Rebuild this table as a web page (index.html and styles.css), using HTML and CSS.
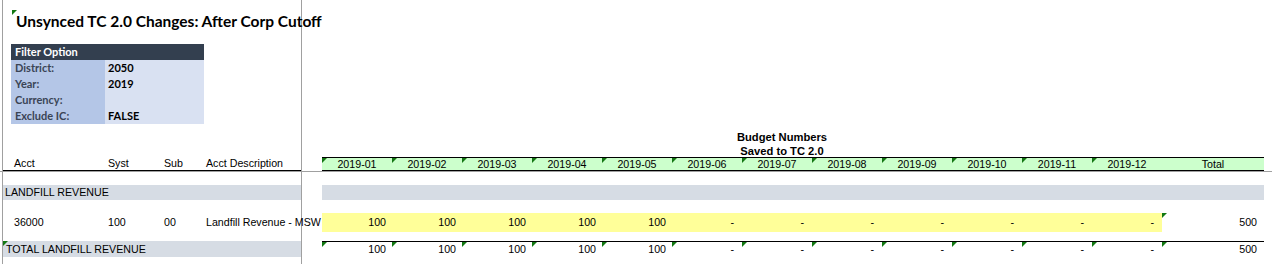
FILE: index.html
```html
<!DOCTYPE html>
<html>
<head>
<meta charset="utf-8">
<link rel="stylesheet" href="styles.css">
</head>
<body>
<div class="sheet">
  <div class="title"><span class="mark"></span><h1>Unsynced TC 2.0 Changes: After Corp Cutoff</h1></div>

  <div class="filter">
    <div class="f-head">Filter Option</div>
    <div class="f-label">District:</div><div class="f-val">2050</div>
    <div class="f-label">Year:</div><div class="f-val">2019</div>
    <div class="f-label">Currency:</div><div class="f-val"></div>
    <div class="f-label">Exclude IC:</div><div class="f-val">FALSE</div>
  </div>

  <div class="budget">Budget Numbers<br>Saved to TC 2.0</div>

  <div class="row hdr">
    <div class="left cols"><span class="c1">Acct</span><span>Syst</span><span>Sub</span><span>Acct Description</span></div>
    <div class="gap"></div>
    <div class="m"><span class="mark"></span>2019-01</div>
    <div class="m"><span class="mark"></span>2019-02</div>
    <div class="m"><span class="mark"></span>2019-03</div>
    <div class="m"><span class="mark"></span>2019-04</div>
    <div class="m"><span class="mark"></span>2019-05</div>
    <div class="m"><span class="mark"></span>2019-06</div>
    <div class="m"><span class="mark"></span>2019-07</div>
    <div class="m"><span class="mark"></span>2019-08</div>
    <div class="m"><span class="mark"></span>2019-09</div>
    <div class="m"><span class="mark"></span>2019-10</div>
    <div class="m"><span class="mark"></span>2019-11</div>
    <div class="m"><span class="mark"></span>2019-12</div>
    <div class="m">Total</div>
  </div>
  <div class="rule"></div>

  <div class="row group">
    <div class="left band">LANDFILL REVENUE</div>
    <div class="gap"></div>
    <div class="band span-all"></div>
  </div>

  <div class="row data">
    <div class="left cols"><span class="c1">36000</span><span>100</span><span>00</span><span class="desc">Landfill Revenue - MSW</span></div>
    <div class="gap"></div>
    <div class="v y">100</div>
    <div class="v y">100</div>
    <div class="v y">100</div>
    <div class="v y">100</div>
    <div class="v y">100</div>
    <div class="v y dash">-</div>
    <div class="v y dash">-</div>
    <div class="v y dash">-</div>
    <div class="v y dash">-</div>
    <div class="v y dash">-</div>
    <div class="v y dash">-</div>
    <div class="v y dash">-</div>
    <div class="v tot"><span class="mark"></span>500</div>
  </div>

  <div class="row total">
    <div class="left band"><span class="mark"></span>TOTAL LANDFILL REVENUE</div>
    <div class="gap"></div>
    <div class="v t"><span class="mark"></span>100</div>
    <div class="v t"><span class="mark"></span>100</div>
    <div class="v t"><span class="mark"></span>100</div>
    <div class="v t"><span class="mark"></span>100</div>
    <div class="v t"><span class="mark"></span>100</div>
    <div class="v t dash"><span class="mark"></span>-</div>
    <div class="v t dash"><span class="mark"></span>-</div>
    <div class="v t dash"><span class="mark"></span>-</div>
    <div class="v t dash"><span class="mark"></span>-</div>
    <div class="v t dash"><span class="mark"></span>-</div>
    <div class="v t dash"><span class="mark"></span>-</div>
    <div class="v t dash"><span class="mark"></span>-</div>
    <div class="v t tot"><span class="mark"></span>500</div>
  </div>
</div>
</body>
</html>
```

FILE: styles.css
```css
html, body {
  margin: 0;
  padding: 0;
}
body {
  width: 1272px;
  min-height: 264px;
  background:
    linear-gradient(#a0a0a0, #a0a0a0) 2px 0 / 1px 100% no-repeat,
    linear-gradient(#a0a0a0, #a0a0a0) 301px 0 / 1px 100% no-repeat,
    #ffffff;
  font-family: "Liberation Sans", Arial, sans-serif;
  font-size: 10.67px;
  color: #000;
  overflow: hidden;
}
.sheet {
  position: relative;
}
.mark {
  position: absolute;
  left: 0;
  top: 0;
  width: 0;
  height: 0;
  border-top: 5px solid #127812;
  border-right: 5px solid transparent;
}

/* title */
.title {
  position: relative;
  height: 44px;
}
.title .mark {
  left: 12px;
  top: 10px;
}
.title h1 {
  margin: 0;
  padding: 11px 0 0 16px;
  font-family: Lato, "Open Sans", sans-serif;
  font-weight: 700;
  font-size: 15.5px;
  line-height: 20px;
  color: #000;
  white-space: nowrap;
}

/* filter table */
.filter {
  margin-left: 11px;
  width: 193px;
  display: grid;
  grid-template-columns: 94px 99px;
  grid-auto-rows: 16px;
  font-family: Lato, "Open Sans", sans-serif;
  font-weight: 700;
  font-size: 11px;
  line-height: 16px;
}
.f-head {
  grid-column: 1 / -1;
  background: #333f4f;
  color: #fff;
  padding-left: 4px;
}
.f-label {
  background: #b4c6e7;
  color: #3a4455;
  padding-left: 4px;
}
.f-val {
  background: #d9e1f2;
  color: #000;
  padding-left: 3px;
}

/* budget header */
.budget {
  box-sizing: border-box;
  height: 33px;
  margin-left: 302px;
  width: 960px;
  padding-top: 6px;
  text-align: center;
  font-weight: 700;
  font-size: 11.2px;
  line-height: 14px;
}

/* grid rows */
.row {
  display: grid;
  grid-template-columns: 298px 21px repeat(12, 70px) 102px;
  padding-left: 3px;
  height: 15px;
}
.left {
  position: relative;
  white-space: nowrap;
}
.cols {
  display: grid;
  grid-template-columns: 105px 56px 42px 1fr;
}
.cols .c1 {
  padding-left: 11px;
}

.hdr {
  height: 14px;
  line-height: 13px;
}
.hdr .cols {
  border-bottom: 1px solid #000;
}
.hdr .m {
  position: relative;
  box-sizing: border-box;
  background: #ccffcc;
  border-top: 1px solid #000;
  border-bottom: 1px solid #000;
  text-align: center;
  line-height: 12px;
}
.rule {
  height: 1px;
  background: #a0a0a0;
}

.group {
  margin-top: 13px;
  line-height: 15px;
}
.band {
  background: #d6dce4;
}
.group .left {
  padding-left: 2px;
}
.span-all {
  grid-column: 3 / -1;
}

.data {
  margin-top: 13px;
  line-height: 18.5px;
}
.desc {
  overflow: visible;
}
.v {
  position: relative;
  text-align: right;
  padding-right: 6px;
}
.v.dash {
  padding-right: 8px;
}
.v.tot {
  padding-right: 7px;
}
.y {
  background: #ffff99;
}

.total {
  margin-top: 13px;
  line-height: 16px;
}
.total .left {
  padding-left: 3px;
}
.t {
  box-sizing: border-box;
  border-top: 1px solid #000;
  line-height: 15px;
}
```
